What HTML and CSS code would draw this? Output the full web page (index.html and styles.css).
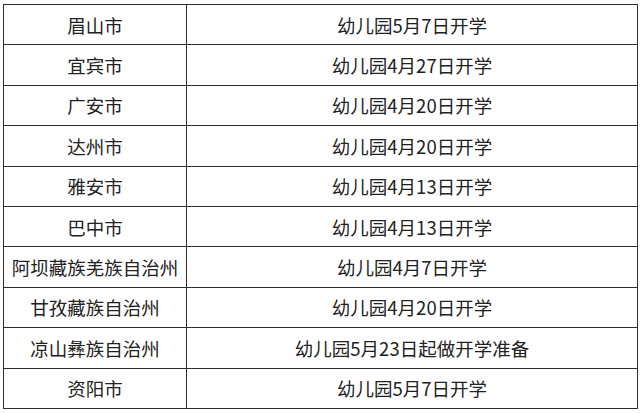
FILE: index.html
```html
<!DOCTYPE html>
<html lang="zh">
<head>
<meta charset="utf-8">
<link rel="stylesheet" href="styles.css">
</head>
<body>
<table class="sched">
<tbody>
<tr><td class="city">眉山市</td><td class="date">幼儿园5月7日开学</td></tr>
<tr><td class="city">宜宾市</td><td class="date">幼儿园4月27日开学</td></tr>
<tr><td class="city">广安市</td><td class="date">幼儿园4月20日开学</td></tr>
<tr><td class="city">达州市</td><td class="date">幼儿园4月20日开学</td></tr>
<tr><td class="city">雅安市</td><td class="date">幼儿园4月13日开学</td></tr>
<tr><td class="city">巴中市</td><td class="date">幼儿园4月13日开学</td></tr>
<tr><td class="city">阿坝藏族羌族自治州</td><td class="date">幼儿园4月7日开学</td></tr>
<tr><td class="city">甘孜藏族自治州</td><td class="date">幼儿园4月20日开学</td></tr>
<tr><td class="city">凉山彝族自治州</td><td class="date">幼儿园5月23日起做开学准备</td></tr>
<tr><td class="city">资阳市</td><td class="date">幼儿园5月7日开学</td></tr>
</tbody>
</table>
</body>
</html>
```
FILE: styles.css
```css
html, body {
  margin: 0;
  padding: 0;
  background: #ffffff;
}
body {
  padding: 4px 0 0 3px;
  font-family: "Noto Sans CJK SC", "Noto Sans", sans-serif;
  color: #222222;
}
.sched {
  border-collapse: collapse;
  table-layout: fixed;
  width: 635px;
}
.sched td {
  border: 1.6px solid #2e2e2e;
  height: 39.4px;
  padding: 0;
  text-align: center;
  vertical-align: middle;
  font-size: 18.5px;
  line-height: 22px;
}
.sched .city {
  width: 182px;
}
```
